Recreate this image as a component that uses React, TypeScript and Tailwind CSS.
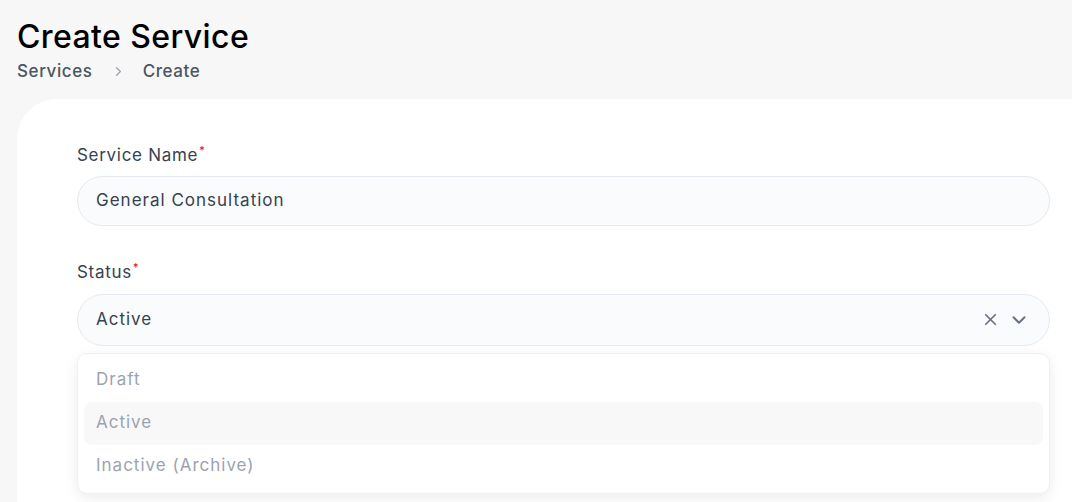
import { X, ChevronDown, ChevronRight } from "lucide-react";

const options = ["Draft", "Active", "Inactive (Archive)"];

function Label({ text }: { text: string }) {
  return (
    <label className="block text-[17px] leading-6 tracking-[0.7px] text-[#374151]">
      {text}
      <span className="relative -top-[7px] ml-[1px] text-[11px] text-red-600">*</span>
    </label>
  );
}

export default function App() {
  const selected = "Active";

  return (
    <div className="min-h-[502px] w-[1072px] overflow-hidden bg-[#f7f7f7] font-['Inter',sans-serif]">
      <header className="px-[17px] pt-[18px]">
        <h1 className="text-[32px] font-medium leading-[38px] tracking-[0.4px] text-black">
          Create Service
        </h1>
        <nav className="mt-[3px] flex items-center text-[17px] font-medium tracking-[0.6px] text-[#4b5563]">
          <span>Services</span>
          <ChevronRight className="ml-[18px] h-[15px] w-[15px] text-[#9ca3af]" strokeWidth={2} />
          <span className="ml-[17px]">Create</span>
        </nav>
      </header>

      <main className="ml-[17px] mt-[14px] h-[420px] rounded-tl-[40px] bg-white pl-[60px] pr-[22px] pt-[44px]">
        <div className="flex flex-col">
          <Label text="Service Name" />
          <div className="mt-[7px] flex h-[50px] items-center rounded-full border border-[#e5eaf0] bg-[#f9fbfd] px-[18px] text-[17px] tracking-[1px] text-[#374151]">
            General Consultation
          </div>

          <div className="mt-[34px]">
            <Label text="Status" />
          </div>
          <div className="relative mt-[8px]">
            <div className="flex h-[52px] items-center justify-between rounded-full border border-[#e5eaf0] bg-[#f9fbfd] pl-[18px] pr-[19px] text-[17px] tracking-[1px] text-[#374151]">
              <span>{selected}</span>
              <div className="flex items-center gap-[8px] text-[#6b7280]">
                <X className="h-[19px] w-[19px]" strokeWidth={2.2} />
                <ChevronDown className="h-[22px] w-[22px]" strokeWidth={2.2} />
              </div>
            </div>

            <ul className="absolute left-0 right-0 top-[59px] rounded-[10px] border border-[#eef0f3] bg-white px-[6px] py-[5px] shadow-[0_4px_14px_rgba(0,0,0,0.08)]">
              {options.map((o) => (
                <li
                  key={o}
                  className={`flex h-[43px] items-center rounded-[8px] px-[12px] text-[17px] tracking-[1px] text-[#9ca3af] ${
                    o === selected ? "bg-[#f8f8f9]" : ""
                  }`}
                >
                  {o}
                </li>
              ))}
            </ul>
          </div>
        </div>
      </main>
    </div>
  );
}
